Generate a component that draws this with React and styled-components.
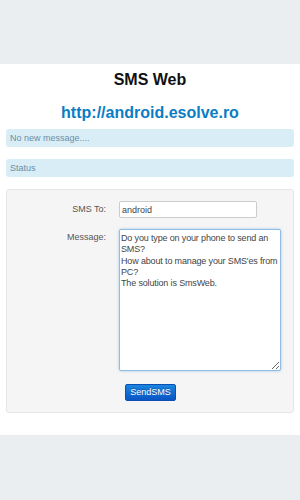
import React from "react";
import styled, { createGlobalStyle } from "styled-components";

const Global = createGlobalStyle`
    html, body {
        margin: 0;
        padding: 0;
        background: #ebeef1;
        font-family: "Liberation Sans", Arial, sans-serif;
    }
`;

const Page = styled.div`
    height: 500px;
    padding-top: 64px;
    box-sizing: border-box;
`;

const Main = styled.div`
    background: #fff;
    height: 371px;
    padding: 6px 6px 0;
    box-sizing: border-box;
`;

const Title = styled.h1`
    margin: 0;
    text-align: center;
    font-size: 16px;
    line-height: 20px;
    color: #111;
`;

const Link = styled.a`
    display: block;
    margin-top: 12px;
    text-align: center;
    font-size: 16px;
    font-weight: bold;
    line-height: 22px;
    color: #0a7dc4;
    text-decoration: none;
`;

const Alert = styled.div`
    margin-top: ${(props) => props.gap}px;
    height: 18px;
    padding: 0 4px;
    background: #d9edf7;
    border-radius: 3px;
    font-size: 9px;
    line-height: 18px;
    color: #6a8ea6;
`;

const Well = styled.div`
    margin-top: 12px;
    height: 224px;
    background: #f5f5f5;
    border: 1px solid #e6e6e6;
    border-radius: 3px;
    box-sizing: border-box;
    padding-top: 11px;
`;

const Row = styled.div`
    display: grid;
    grid-template-columns: 99px 1fr;
    column-gap: 13px;
    align-items: start;
    margin-bottom: ${(props) => props.gap || 0}px;
`;

const Label = styled.label`
    text-align: right;
    font-size: 9px;
    color: #555;
    line-height: 17px;
`;

const Input = styled.input`
    width: 138px;
    height: 17px;
    box-sizing: border-box;
    border: 1px solid #ccc;
    border-radius: 2px;
    padding: 0 2px;
    font-family: inherit;
    font-size: 9px;
    color: #444;
    background: #fff;
    outline: none;
`;

const TextArea = styled.textarea`
    width: 162px;
    height: 142px;
    box-sizing: border-box;
    border: 1px solid #8fbce0;
    box-shadow: 0 0 3px rgba(82, 168, 236, 0.5);
    border-radius: 2px;
    padding: 3px 1px;
    font-family: inherit;
    font-size: 9px;
    letter-spacing: -0.15px;
    line-height: 11.3px;
    color: #444;
    resize: both;
    outline: none;
    margin: 0;
`;

const Actions = styled.div`
    padding-left: 118px;
    margin-top: 10px;
`;

const Button = styled.button`
    width: 51px;
    height: 17px;
    padding: 0;
    border: 1px solid #0b4fb0;
    border-radius: 2px;
    background: linear-gradient(#1a85e0, #0a55c4);
    color: #fff;
    font-family: inherit;
    font-size: 9px;
    line-height: 15px;
    text-shadow: 0 -1px 0 rgba(0, 0, 0, 0.25);
`;

const message =
    "Do you type on your phone to send an SMS?\nHow about to manage your SMS'es from PC?\nThe solution is SmsWeb.";

export default function App() {
    return (
        <Page>
            <Global />
            <Main>
                <Title>SMS Web</Title>
                <Link href="#">http://android.esolve.ro</Link>
                <Alert gap={5}>No new message....</Alert>
                <Alert gap={12}>Status</Alert>
                <Well>
                    <Row gap={11}>
                        <Label>SMS To:</Label>
                        <Input defaultValue="android" />
                    </Row>
                    <Row>
                        <Label>Message:</Label>
                        <TextArea defaultValue={message} />
                    </Row>
                    <Actions>
                        <Button>SendSMS</Button>
                    </Actions>
                </Well>
            </Main>
        </Page>
    );
}
